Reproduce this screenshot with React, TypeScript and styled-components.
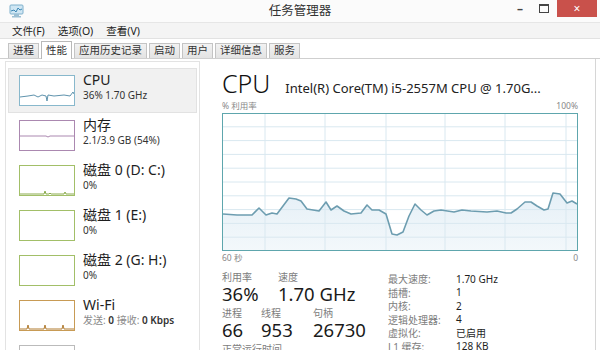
import styled, { createGlobalStyle } from 'styled-components';

const GlobalStyle = createGlobalStyle`
    html, body {
        margin: 0;
        padding: 0;
        background: #ffffff;
    }
    body {
        font-family: 'Noto Sans', 'Noto Sans CJK SC', sans-serif;
        color: #222;
    }
`;

type Resource = {
    name: string;
    detail: string;
    color: string;
    kind: 'cpu' | 'mem' | 'disk' | 'diskIdle' | 'wifi';
    selected?: boolean;
};

const resources: Resource[] = [
    { name: 'CPU', detail: '36% 1.70 GHz', color: '#88b8cc', kind: 'cpu', selected: true },
    { name: '内存', detail: '2.1/3.9 GB (54%)', color: '#ab88b0', kind: 'mem' },
    { name: '磁盘 0 (D: C:)', detail: '0%', color: '#a2bf68', kind: 'disk' },
    { name: '磁盘 1 (E:)', detail: '0%', color: '#a2bf68', kind: 'diskIdle' },
    { name: '磁盘 2 (G: H:)', detail: '0%', color: '#a2bf68', kind: 'diskIdle' },
    { name: 'Wi-Fi', detail: '', color: '#c89b55', kind: 'wifi' },
    { name: '蓝牙', detail: '', color: '#bbbbbb', kind: 'diskIdle' },
];

const tabs = ['进程', '性能', '应用历史记录', '启动', '用户', '详细信息', '服务'];

const cpuPoints = [
    [1, 101], [15, 102], [30, 102], [37, 95], [44, 102], [50, 100], [55, 101], [67, 85],
    [74, 86], [79, 88], [85, 96], [97, 98], [104, 89], [109, 97], [115, 93], [122, 98],
    [129, 101], [139, 100], [145, 92], [150, 97], [157, 97], [164, 101], [170, 121],
    [175, 122], [181, 119], [187, 103], [193, 91], [199, 97], [205, 102], [212, 98],
    [219, 97], [232, 99], [240, 97], [249, 98], [265, 99], [275, 98], [284, 100],
    [289, 100], [295, 96], [303, 89], [309, 89], [315, 93], [322, 97], [326, 96],
    [331, 80], [338, 81], [345, 90], [350, 88], [355, 91],
];

const specs = [
    ['最大速度:', '1.70 GHz'],
    ['插槽:', '1'],
    ['内核:', '2'],
    ['逻辑处理器:', '4'],
    ['虚拟化:', '已启用'],
    ['L1 缓存:', '128 KB'],
];

const Thumb = ({ kind, color }: { kind: Resource['kind']; color: string }) => {
    let content: React.ReactNode = null;
    if (kind === 'cpu') {
        content = (
            <polyline
                points="0,21 8,20 14,19 18,21 22,19 26,20 27,25 28,19 34,20 44,19 50,20 53,16 54,18"
                fill="none"
                stroke="#5f93ad"
                strokeWidth="1"
            />
        );
    } else if (kind === 'mem') {
        content = <polyline points="0,15 26,15 28,16 30,15 54,15" fill="none" stroke={color} strokeWidth="1" />;
    } else if (kind === 'disk') {
        content = (
            <polyline
                points="0,28 24,28 25,25 26,28 29,28 30,27 31,28 44,28 45,26 46,28 54,28"
                fill="none"
                stroke="#8aab4c"
                strokeWidth="1"
            />
        );
    } else if (kind === 'wifi') {
        content = (
            <polyline
                points="0,28 7,28 8,24 9,28 24,28 25,24 26,28 42,28 43,24 44,28 54,28"
                fill="none"
                stroke="#b07a2e"
                strokeWidth="1"
            />
        );
    }
    return (
        <ThumbBox $color={color}>
            <svg width="54" height="29" viewBox="0 0 54 29">
                {content}
            </svg>
        </ThumbBox>
    );
};

const CpuGraph = () => {
    const w = 356;
    const h = 138;
    const verticals = [43, 103, 164, 223, 283, 344];
    const rows = Array.from({ length: 9 }, (_, i) => ((i + 1) * h) / 10);
    const line = cpuPoints.map(([x, y]) => `${x},${y}`).join(' ');
    const area = `0,${h} ${line} ${w},${h}`;
    return (
        <GraphFrame>
            <svg width={w - 2} height={h - 2} viewBox={`1 1 ${w - 2} ${h - 2}`}>
                <defs>
                    <linearGradient id="cpuFill" x1="0" y1="0" x2="0" y2="1">
                        <stop offset="0" stopColor="#e6f0f7" />
                        <stop offset="1" stopColor="#f3f8fb" />
                    </linearGradient>
                </defs>
                <polygon points={area} fill="url(#cpuFill)" />
                {rows.map((y) => (
                    <line key={y} x1="0" x2={w} y1={y} y2={y} stroke="#d9e8f0" strokeWidth="1" />
                ))}
                {verticals.map((x) => (
                    <line key={x} x1={x} x2={x} y1="0" y2={h} stroke="#d9e8f0" strokeWidth="1" />
                ))}
                <polyline points={line} fill="none" stroke="#6d9db0" strokeWidth="1.6" strokeLinejoin="round" />
            </svg>
        </GraphFrame>
    );
};

const AppIcon = () => (
    <svg width="16" height="14" viewBox="0 0 16 14">
        <rect x="1" y="1" width="13" height="9" rx="1" fill="#cfe6f3" stroke="#7fb0cc" />
        <polyline points="2,7 5,6 7,8 9,4 11,6 13,5" fill="none" stroke="#3a86b5" strokeWidth="1" />
        <rect x="5" y="10" width="5" height="2" fill="#9cbfd3" />
        <rect x="3" y="12" width="9" height="1.5" fill="#9cbfd3" />
    </svg>
);

export default function App() {
    return (
        <Window>
            <GlobalStyle />
            <TitleBar>
                <AppIcon />
                <Title>任务管理器</Title>
                <Controls>
                    <ControlGlyph>–</ControlGlyph>
                    <MaxGlyph />
                    <CloseButton>×</CloseButton>
                </Controls>
            </TitleBar>
            <MenuBar>
                <MenuItem>文件(F)</MenuItem>
                <MenuItem>选项(O)</MenuItem>
                <MenuItem>查看(V)</MenuItem>
            </MenuBar>
            <TabBar>
                {tabs.map((t) => (
                    <Tab key={t} $active={t === '性能'}>
                        {t}
                    </Tab>
                ))}
            </TabBar>
            <Body>
                <Sidebar>
                    {resources.map((r) => (
                        <ResourceItem key={r.name} $selected={!!r.selected}>
                            <Thumb kind={r.kind} color={r.color} />
                            <ResourceText>
                                <ResourceName>{r.name}</ResourceName>
                                <ResourceDetail>
                                    {r.kind === 'wifi' ? (
                                        <>
                                            <Dim>发送:</Dim> <b>0</b> <Dim>接收:</Dim> <b>0 Kbps</b>
                                        </>
                                    ) : (
                                        r.detail
                                    )}
                                </ResourceDetail>
                            </ResourceText>
                        </ResourceItem>
                    ))}
                </Sidebar>
                <Main>
                    <Header>
                        <BigTitle>CPU</BigTitle>
                        <Model>Intel(R) Core(TM) i5-2557M CPU @ 1.70G...</Model>
                    </Header>
                    <AxisRow>
                        <span>% 利用率</span>
                        <span>100%</span>
                    </AxisRow>
                    <CpuGraph />
                    <AxisRow>
                        <span>60 秒</span>
                        <span>0</span>
                    </AxisRow>
                    <Stats>
                        <LiveStats>
                            <StatRow>
                                <Stat $width={56}>
                                    <StatLabel>利用率</StatLabel>
                                    <StatValue>36%</StatValue>
                                </Stat>
                                <Stat $width={90}>
                                    <StatLabel>速度</StatLabel>
                                    <StatValue>1.70 GHz</StatValue>
                                </Stat>
                            </StatRow>
                            <StatRow>
                                <Stat $width={39}>
                                    <StatLabel>进程</StatLabel>
                                    <StatValue>66</StatValue>
                                </Stat>
                                <Stat $width={52}>
                                    <StatLabel>线程</StatLabel>
                                    <StatValue>953</StatValue>
                                </Stat>
                                <Stat $width={60}>
                                    <StatLabel>句柄</StatLabel>
                                    <StatValue>26730</StatValue>
                                </Stat>
                            </StatRow>
                            <StatRow>
                                <Stat $width={120}>
                                    <StatLabel>正常运行时间</StatLabel>
                                </Stat>
                            </StatRow>
                        </LiveStats>
                        <SpecTable>
                            {specs.map(([k, v]) => (
                                <SpecRow key={k}>
                                    <SpecKey>{k}</SpecKey>
                                    <SpecValue>{v}</SpecValue>
                                </SpecRow>
                            ))}
                        </SpecTable>
                    </Stats>
                </Main>
            </Body>
        </Window>
    );
}

const Window = styled.div`
    width: 600px;
    height: 350px;
    overflow: hidden;
    display: flex;
    flex-direction: column;
    background: #ffffff;
`;

const TitleBar = styled.div`
    height: 22px;
    flex: none;
    display: flex;
    align-items: center;
    padding-left: 9px;
    position: relative;
    background: #fbfbfb;
`;

const Title = styled.div`
    position: absolute;
    left: 0;
    right: 0;
    text-align: center;
    font-size: 12.5px;
    color: #333;
    line-height: 22px;
    top: 0;
`;

const Controls = styled.div`
    margin-left: auto;
    display: flex;
    align-items: flex-start;
    height: 22px;
    position: relative;
    z-index: 1;
`;

const ControlGlyph = styled.div`
    width: 24px;
    text-align: center;
    font-size: 12px;
    line-height: 18px;
    color: #444;
    font-weight: bold;
`;

const MaxGlyph = styled.div`
    width: 8px;
    height: 6px;
    border: 1px solid #444;
    border-top-width: 2px;
    margin: 4px 8px 0 7px;
`;

const CloseButton = styled.div`
    width: 40px;
    height: 17px;
    margin-right: 3px;
    background: #c9514b;
    color: #fff;
    font-size: 12px;
    line-height: 17px;
    text-align: center;
`;

const MenuBar = styled.div`
    height: 15px;
    flex: none;
    display: flex;
    align-items: center;
    gap: 13px;
    padding-left: 12px;
    background: #f4f4f4;
    border-top: 1px solid #e6e6e6;
    border-bottom: 1px solid #e2e2e2;
`;

const MenuItem = styled.span`
    font-size: 10.5px;
    color: #222;
`;

const TabBar = styled.div`
    height: 19px;
    flex: none;
    display: flex;
    align-items: flex-end;
    gap: 2px;
    padding-left: 8px;
    border-bottom: 1px solid #cfcfcf;
`;

const Tab = styled.div<{ $active: boolean }>`
    height: ${(p) => (p.$active ? 17 : 14)}px;
    padding: 0 4px;
    font-size: 10.5px;
    line-height: ${(p) => (p.$active ? 16 : 13)}px;
    color: #333;
    border: 1px solid ${(p) => (p.$active ? '#b9b9b9' : '#c4c4c4')};
    border-bottom: none;
    background: ${(p) => (p.$active ? '#ffffff' : 'linear-gradient(#f2f2f2, #e3e3e3)')};
    margin-bottom: ${(p) => (p.$active ? -1 : 0)}px;
`;

const Body = styled.div`
    flex: 1;
    display: flex;
    min-height: 0;
    padding: 2px 0 0 5px;
    border-right: 1px solid #d6d6d6;
    margin-right: 4px;
`;

const Sidebar = styled.div`
    width: 189px;
    flex: none;
    border: 1px solid #e3e3e3;
    border-bottom: none;
    padding: 6px 2px 0 2px;
    display: flex;
    flex-direction: column;
`;

const ResourceItem = styled.div<{ $selected: boolean }>`
    height: 45px;
    flex: none;
    box-sizing: border-box;
    display: flex;
    align-items: center;
    padding-left: 10px;
    gap: 8px;
    background: ${(p) => (p.$selected ? '#f1f1f1' : 'transparent')};
    border: 1px solid ${(p) => (p.$selected ? '#e2e2e2' : 'transparent')};
`;

const ThumbBox = styled.div<{ $color: string }>`
    width: 54px;
    height: 29px;
    border: 1px solid ${(p) => p.$color};
    background: #ffffff;
    flex: none;
    svg {
        display: block;
    }
`;

const ResourceText = styled.div`
    display: flex;
    flex-direction: column;
    margin-top: -9px;
`;

const ResourceName = styled.div`
    font-size: 14px;
    line-height: 19px;
    color: #1e1e1e;
    white-space: nowrap;
`;

const ResourceDetail = styled.div`
    font-size: 10px;
    line-height: 13px;
    color: #333;
    white-space: nowrap;
    b {
        font-weight: 600;
    }
`;

const Dim = styled.span`
    color: #8a8a8a;
`;

const Main = styled.div`
    flex: 1;
    display: flex;
    flex-direction: column;
    padding: 6px 0 0 22px;
    width: 356px;
    max-width: 356px;
`;

const Header = styled.div`
    display: flex;
    align-items: baseline;
    gap: 15px;
    height: 36px;
`;

const BigTitle = styled.div`
    font-size: 25px;
    line-height: 32px;
    color: #111;
    font-weight: 300;
`;

const Model = styled.div`
    font-size: 13px;
    color: #222;
    white-space: nowrap;
`;

const AxisRow = styled.div`
    width: 356px;
    display: flex;
    justify-content: space-between;
    font-size: 8.5px;
    line-height: 12px;
    color: #888;
    padding: 1px 0;
`;

const GraphFrame = styled.div`
    width: 354px;
    height: 136px;
    border: 1px solid #5ea6ad;
    svg {
        display: block;
    }
`;

const Stats = styled.div`
    display: flex;
    margin-top: 5px;
`;

const LiveStats = styled.div`
    width: 166px;
    flex: none;
    display: flex;
    flex-direction: column;
`;

const StatRow = styled.div`
    display: flex;
    height: 36px;
`;

const Stat = styled.div<{ $width: number }>`
    width: ${(p) => p.$width}px;
    flex: none;
    display: flex;
    flex-direction: column;
`;

const StatLabel = styled.div`
    font-size: 10px;
    line-height: 14px;
    color: #7d7d7d;
    white-space: nowrap;
`;

const StatValue = styled.div`
    font-size: 18.5px;
    line-height: 20px;
    color: #1a1a1a;
    white-space: nowrap;
`;

const SpecTable = styled.div`
    display: flex;
    flex-direction: column;
    margin-top: 2px;
`;

const SpecRow = styled.div`
    display: flex;
    height: 13.5px;
    align-items: center;
`;

const SpecKey = styled.div`
    width: 68px;
    font-size: 10px;
    color: #7d7d7d;
`;

const SpecValue = styled.div`
    font-size: 10px;
    color: #1e1e1e;
`;
